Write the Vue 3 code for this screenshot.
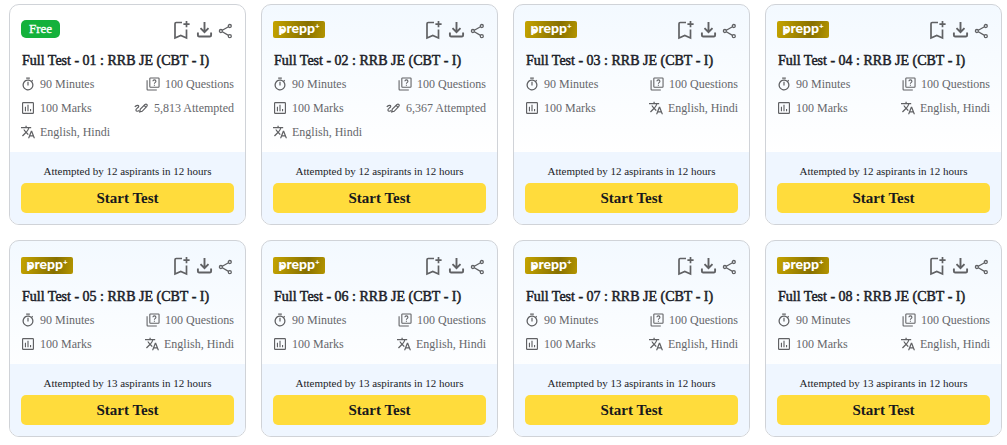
<script setup>
const makeTest = (n, aspirants, attempted) => ({
  id: n,
  title: `Full Test - 0${n} : RRB JE (CBT - I)`,
  free: n === 1,
  aspirants,
  details: [
    { icon: 'timer', text: '90 Minutes' },
    { icon: 'quiz', text: '100 Questions' },
    { icon: 'marks', text: '100 Marks' },
    ...(attempted ? [{ icon: 'pen', text: `${attempted} Attempted` }] : []),
    { icon: 'language', text: 'English, Hindi' },
  ],
})

const tests = [
  makeTest(1, 12, '5,813'),
  makeTest(2, 12, '6,367'),
  makeTest(3, 12),
  makeTest(4, 12),
  makeTest(5, 13),
  makeTest(6, 13),
  makeTest(7, 13),
  makeTest(8, 13),
]
</script>

<template>
  <main class="tests">
    <article v-for="test in tests" :key="test.id" class="card" :class="{ premium: !test.free }">
      <div class="body">
        <header class="top">
          <span v-if="test.free" class="free">Free</span>
          <span v-else class="prepp"><span class="lead">p</span>repp<sup>+</sup></span>
          <div class="actions">
            <button type="button" aria-label="Save test">
              <svg width="18" height="20" viewBox="0 0 18 20" fill="none" stroke="#606164" stroke-width="1.7">
                <path d="M10 2.500H4.200Q3 2.500 3 3.700V18L8.800 15.500L14.500 18V9.500" />
                <path d="M14.500 1V7.200M11.400 4.100H17.600" />
              </svg>
            </button>
            <button type="button" aria-label="Download test">
              <svg width="18" height="20" viewBox="0 0 18 20" fill="none" stroke="#606164" stroke-width="1.9">
                <path d="M9.500 2V12M5.500 8.200L9.500 12.200L13.500 8.200" />
                <path d="M2.900 12.500V15.200Q2.900 16.500 4.200 16.500H14.800Q16.100 16.500 16.100 15.200V12.500" />
              </svg>
            </button>
            <button type="button" aria-label="Share test">
              <svg width="16" height="20" viewBox="0 0 16 20" fill="none" stroke="#606164" stroke-width="1.3">
                <path d="M4.300 10.300L10.500 6.800M4.300 11.700L10.500 15.400" />
                <circle cx="2.900" cy="11" r="1.500" />
                <circle cx="11.800" cy="6" r="1.500" />
                <circle cx="11.800" cy="16.200" r="1.500" />
              </svg>
            </button>
          </div>
        </header>
        <h2>{{ test.title }}</h2>
        <ul class="details">
          <li v-for="item in test.details" :key="item.text">
            <svg v-if="item.icon === 'timer'" width="14" height="14" viewBox="1 0 22 23" fill="#606164" aria-hidden="true">
              <path d="M9 1h6v2H9zm2 13h2V8h-2zm8-6.600 1.400-1.400L19 4.600l-1.400 1.400A9 9 0 1 0 19 7.400zM12 20a7 7 0 1 1 0-14 7 7 0 0 1 0 14z" />
            </svg>
            <svg v-else-if="item.icon === 'quiz'" width="14" height="14" viewBox="1 1 22 22" fill="none" stroke="#606164" stroke-width="1.7" aria-hidden="true">
              <rect x="7" y="2.500" width="14.500" height="14.500" rx="1" />
              <path d="M2.700 6V20.300Q2.700 21.300 3.700 21.300H18" />
              <path d="M11.800 7.800Q12 5.500 14.200 5.500Q16.600 5.500 16.600 7.600Q16.600 9 15.200 9.800Q14.200 10.500 14.200 11.600M14.200 13V14.900" />
            </svg>
            <svg v-else-if="item.icon === 'marks'" width="14" height="14" viewBox="1 1 22 22" fill="none" stroke="#606164" stroke-width="1.8" aria-hidden="true">
              <rect x="3.500" y="3.500" width="17" height="17" rx="1" />
              <path d="M8 10V17M12 7V17M16 13.500V17" />
            </svg>
            <svg v-else-if="item.icon === 'pen'" width="15" height="14" viewBox="0 0 15 14" fill="none" stroke="#606164" stroke-width="1.2" aria-hidden="true">
              <path d="M.8 6C2.200 4 5 3.800 4.700 5.500C4.300 7 1.700 7.500 1.900 9.200C2.300 10.800 4.200 10.400 5.300 9.300" />
              <path d="M6.300 8.200L11 3.500Q12 2.600 12.900 3.500Q13.700 4.300 12.800 5.400L8.200 10.300L5.700 10.900Z" />
              <path d="M10.100 4.400L12 6.300" />
            </svg>
            <svg v-else width="14" height="14" viewBox="1 2 22 20" fill="#606164" aria-hidden="true">
              <path d="M12.870 15.070l-2.540-2.510.03-.03A17.520 17.520 0 0 0 14.070 6H17V4h-7V2H8v2H1v2h11.170C11.500 7.920 10.440 9.750 9 11.350 8.070 10.320 7.300 9.190 6.690 8h-2c.73 1.630 1.730 3.170 2.980 4.560l-5.090 5.020L4 19l5-5 3.110 3.110.76-2.040zM18.500 10h-2L12 22h2l1.120-3h4.750L21 22h2l-4.500-12zm-2.620 7l1.620-4.330L19.120 17h-3.240z" />
            </svg>
            <span>{{ item.text }}</span>
          </li>
        </ul>
      </div>
      <footer class="foot">
        <p>Attempted by {{ test.aspirants }} aspirants in 12 hours</p>
        <button type="button" class="start">Start Test</button>
      </footer>
    </article>
  </main>
</template>

<style>
body {
  margin: 0;
  background: #fff;
}
</style>

<style scoped>
.tests {
  display: grid;
  grid-template-columns: repeat(4, 1fr);
  gap: 15px;
  padding: 4px 5px 7px 9px;
  font-family: "Liberation Serif", serif;
  color: #1b1d28;
}

.card {
  display: flex;
  flex-direction: column;
  overflow: hidden;
  border: 1px solid #d0d3d8;
  border-radius: 10px;
  background: #fff;
}

.premium {
  background: linear-gradient(#f3f9ff, #fff 150px);
}

.body {
  flex: 1;
  padding: 15px 11px 8px;
}

.top {
  display: flex;
  justify-content: space-between;
  align-items: flex-start;
  height: 20px;
}

.free {
  padding: 0 8px;
  border-radius: 5px;
  background: #14b13b;
  color: #fff;
  font-size: 13px;
  line-height: 18px;
  -webkit-text-stroke: 0.3px currentColor;
}

.prepp {
  display: flex;
  justify-content: center;
  width: 52px;
  height: 17px;
  margin-top: 1px;
  border-radius: 2px;
  background: linear-gradient(100deg, #c5a400, #877000 65%, #b49500);
  color: #fff;
  font: 900 14px/14px Lato, sans-serif;
}

.lead {
  background: radial-gradient(circle at 50% 60%, #fff 2px, transparent 3px);
}

.prepp sup {
  font-size: 8px;
  line-height: 10px;
}

.actions {
  display: flex;
  gap: 5px;
}

.actions button {
  display: flex;
  padding: 0;
  border: 0;
  background: none;
  cursor: pointer;
}

h2 {
  margin: 11px 0 1px;
  padding-left: 1px;
  font-size: 14px;
  line-height: 20px;
  font-weight: 400;
  -webkit-text-stroke: 0.5px currentColor;
  white-space: nowrap;
}

.details {
  display: grid;
  grid-template-columns: auto auto;
  justify-content: space-between;
  margin: 0;
  padding: 0;
  list-style: none;
}

.details li {
  display: flex;
  align-items: center;
  gap: 5px;
  height: 24px;
  color: #66676b;
  font-size: 12px;
  white-space: nowrap;
}

.details li:nth-child(even) {
  justify-content: flex-end;
}

.foot {
  padding: 11px;
  background: #eff6ff;
}

.foot p {
  margin: 0 0 4px;
  font-size: 11px;
  line-height: 16px;
  text-align: center;
}

.start {
  display: block;
  width: 100%;
  height: 30px;
  padding: 0;
  border: 0;
  border-radius: 5px;
  background: #ffdc3c;
  color: #17181c;
  font: 700 15px/30px "Liberation Serif", serif;
  cursor: pointer;
}
</style>
